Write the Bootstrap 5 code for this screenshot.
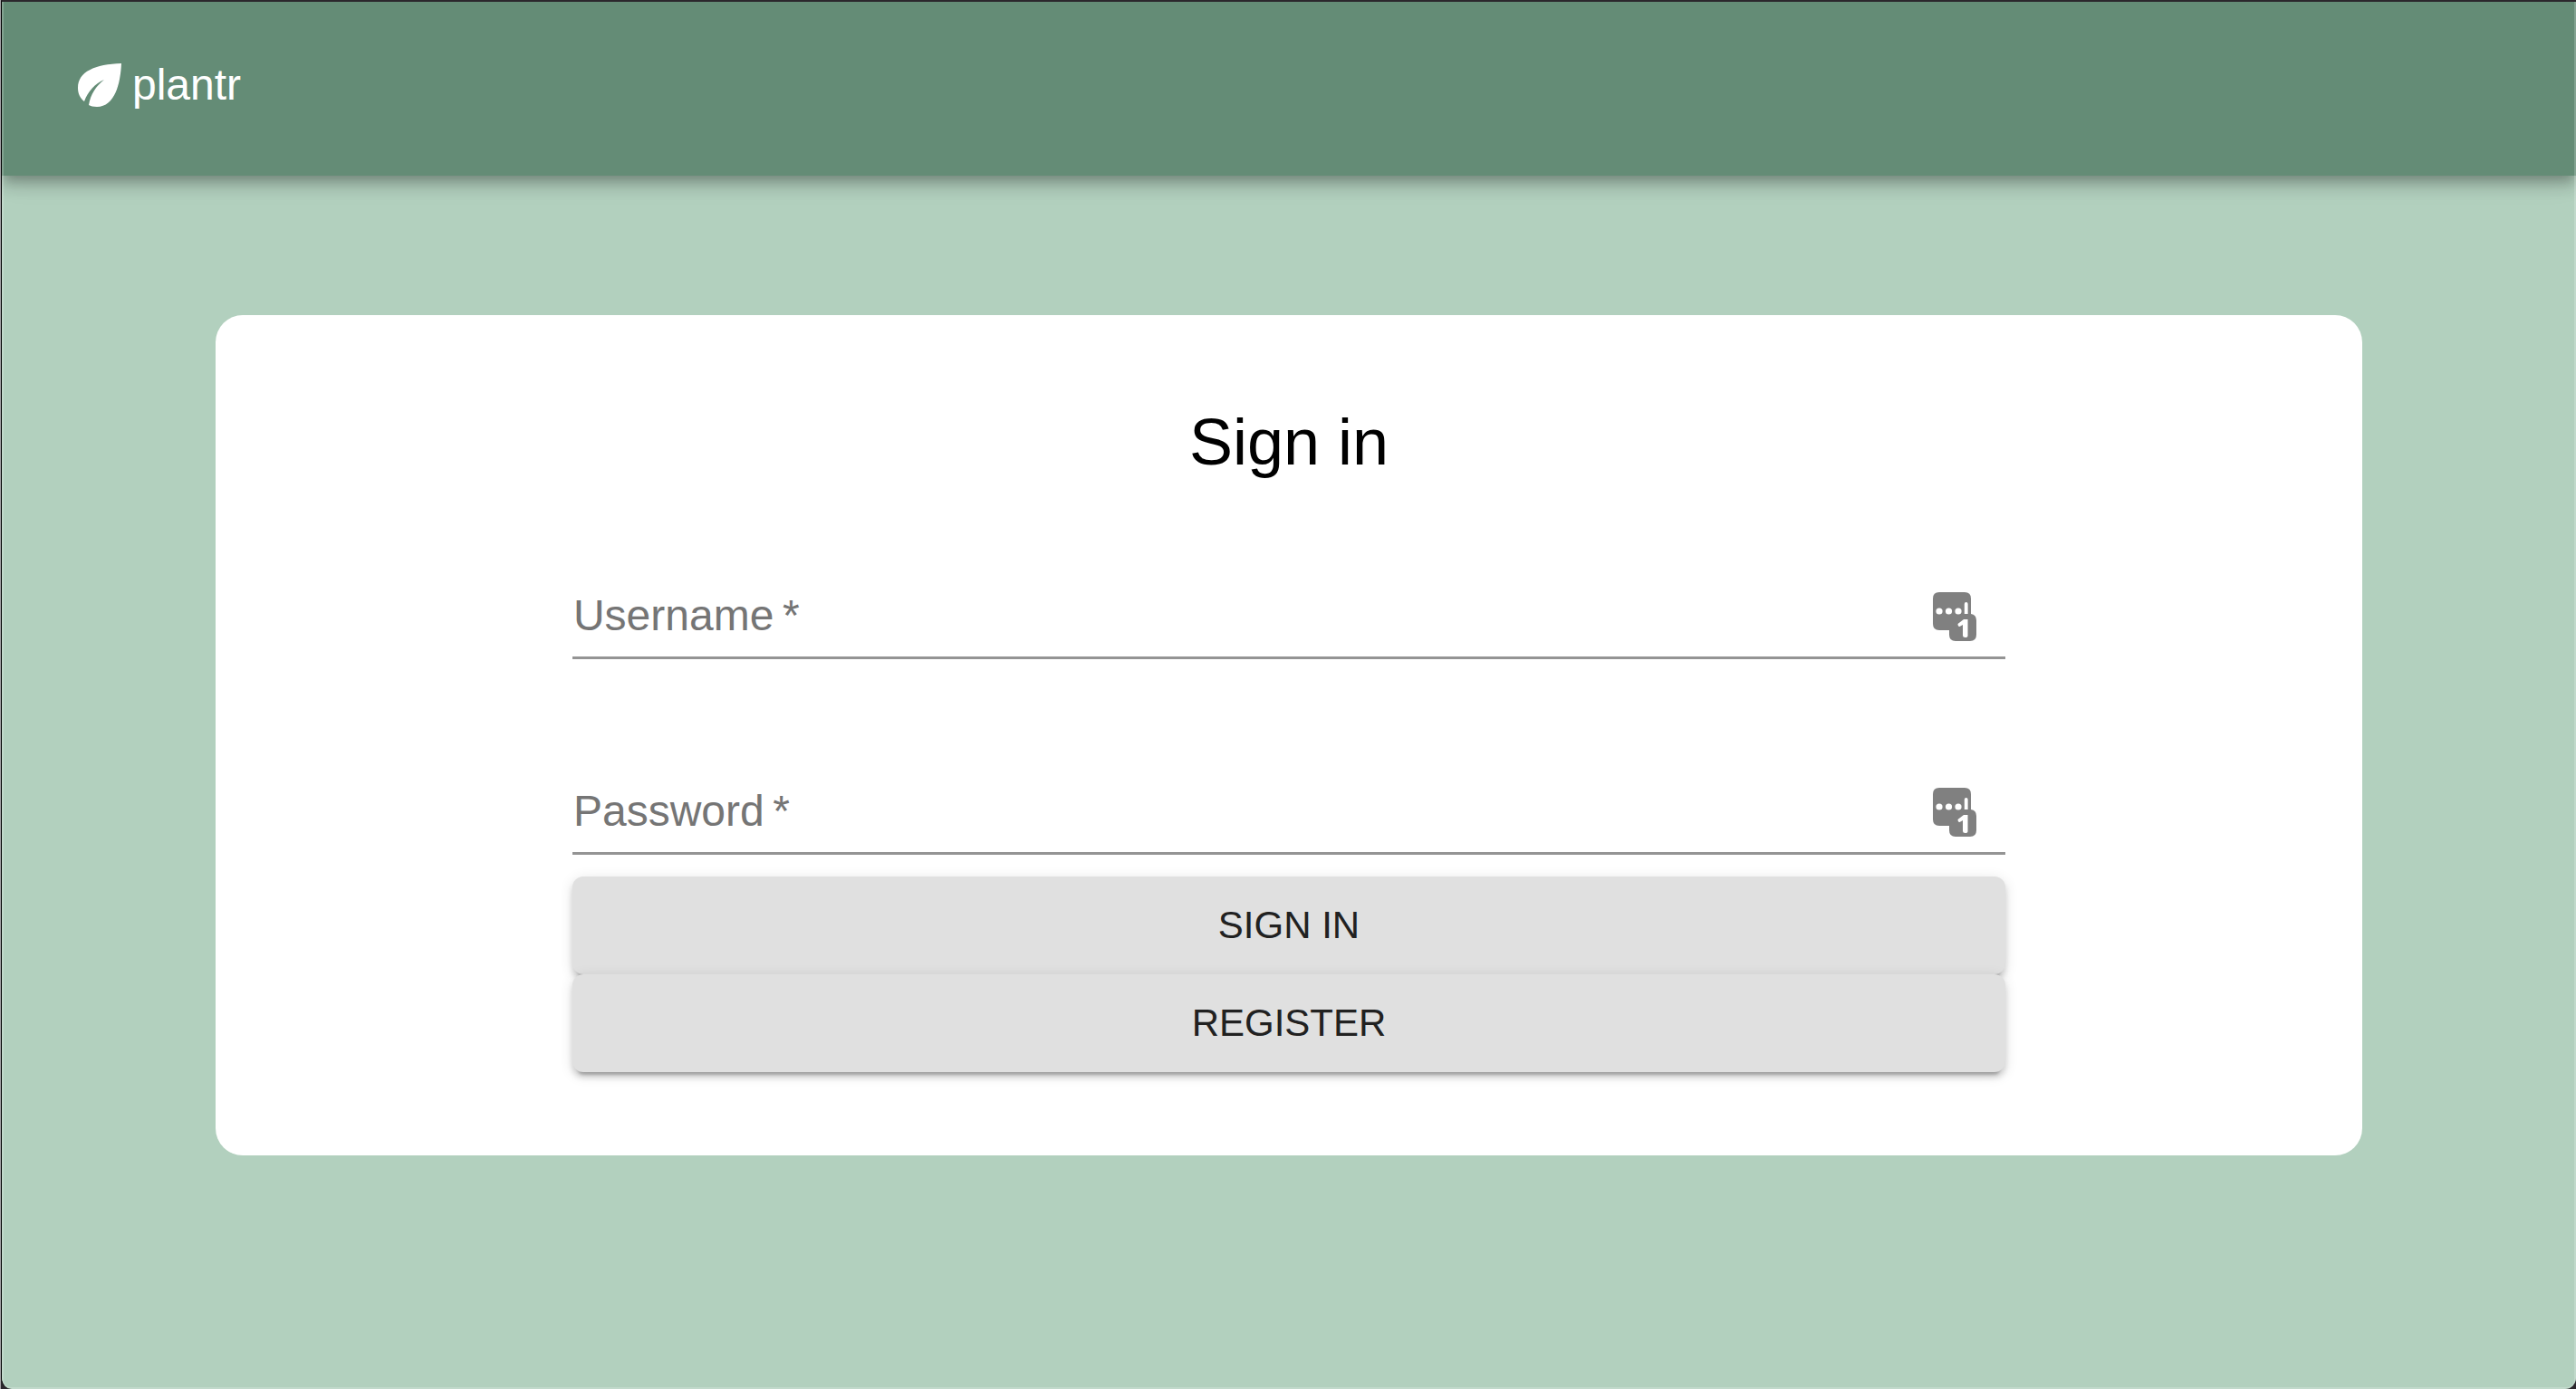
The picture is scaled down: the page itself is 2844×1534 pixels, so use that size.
<!DOCTYPE html>
<html lang="en">
<head>
<meta charset="utf-8">
<meta name="viewport" content="width=device-width, initial-scale=1">
<title>plantr</title>
<link href="https://cdn.jsdelivr.net/npm/bootstrap@5.3.0/dist/css/bootstrap.min.css" rel="stylesheet">
<style>
body { background: #2b272c; font-family: "Liberation Sans", Arial, sans-serif; font-size: 48px; }
.app-window { background: #b2d0be; border-top: 2px solid #2b272c; border-left: 1px solid #000; border-radius: 0 0 12px 12px; overflow: hidden; }
.app-shell { border-left: 1px solid #a6a4a8; }
/* light rim just inside the window frame */
.app-window::after { content: ""; position: absolute; inset: 0; border: 2px solid rgba(255,255,255,.2); border-top: 0; border-radius: 0 0 10px 10px; pointer-events: none; z-index: 5; }
.app-bar { height: 192px; padding: 0 84px 8px; background: #648c76; box-shadow: 0 6px 12px -3px rgba(0,0,0,.2), 0 12px 15px 0 rgba(0,0,0,.14), 0 3px 30px 0 rgba(0,0,0,.12); }
.brand-link { gap: 12px; line-height: 72px; color: #fff; }
.brand-link svg { width: 48px; height: 48px; }
.app-main { padding-top: 154px; }
.panel { width: 83.4%; border-radius: 30px; padding: 92px 0; }
.panel h1 { font-size: 72px; line-height: 96px; font-weight: 400; color: #000; }
.panel form { width: 66.75%; }
.field { padding-top: 48px; margin: 48px 0 24px; }
.field label { top: 72px; left: 1px; line-height: 48px; color: #757575; pointer-events: none; }
.field input { height: 96px; padding: 0 96px 0 0; font-size: 48px; border: 0; border-bottom: 3px solid #949494; border-radius: 0; background: transparent; }
.field input:focus { box-shadow: none; border-color: #648c76; }
.field input:focus ~ label, .field input:not(:placeholder-shown) ~ label { top: 0; font-size: 36px; }
.fill-btn { right: 32px; bottom: 20px; width: 48px; height: 54px; }
.fill-btn svg { width: 48px; height: 54px; }
.btn-raised { height: 108px; padding: 0 48px 2px; font-size: 42px; color: #212121; background: #e0e0e0; border: 0; border-radius: 12px; box-shadow: 0 9px 3px -6px rgba(0,0,0,.2), 0 6px 6px 0 rgba(0,0,0,.14), 0 3px 15px 0 rgba(0,0,0,.12); }
.btn-raised:hover { background: #d5d5d5; }
</style>
<script src="https://cdn.jsdelivr.net/npm/bootstrap@5.3.0/dist/js/bootstrap.bundle.min.js" defer></script>
</head>
<body>
<div class="app-shell">
<div class="app-window position-relative min-vh-100">
  <header class="app-bar position-relative d-flex align-items-center">
    <a class="brand-link d-flex align-items-center text-decoration-none" href="#">
      <svg viewBox="0 0 48 48" fill="#fff" aria-hidden="true"><path d="M48 0C47 22 41 48 21 48C17 48 14 47 12 46C14 34 20 25 29 18C19 22 11 31 7 42C2 38 0 33 0 27C0 9 19 1 48 0Z"/></svg>
      <span>plantr</span>
    </a>
  </header>
  <main class="app-main">
    <section class="panel bg-white mx-auto">
      <h1 class="text-center mb-0">Sign in</h1>
      <form class="d-flex flex-column mx-auto">
        <div class="field position-relative">
          <input class="form-control" type="text" id="username" placeholder=" " required>
          <label class="position-absolute" for="username">Username&thinsp;*</label>
          <button class="fill-btn btn p-0 border-0 position-absolute d-flex" type="button" aria-label="Fill username">
            <svg viewBox="0 0 48 54" aria-hidden="true"><path fill="#808080" d="M7 0H35Q42 0 42 7V24Q48 25 48 31V47Q48 54 41 54H25Q18 54 18 47V42H7Q0 42 0 35V7Q0 0 7 0Z"/><g fill="#fff"><circle cx="7" cy="21" r="3.600"/><circle cx="17.500" cy="21" r="3.600"/><circle cx="28" cy="21" r="3.600"/><path d="M34.800 24V13Q34.800 11 36.700 11Q38.600 11 38.600 13V24ZM34 30H38.500V48Q38.500 50 35.700 50Q33 50 33 48V36L29.500 38Q27.500 38 27.500 35Z"/></g></svg>
          </button>
        </div>
        <div class="field position-relative">
          <input class="form-control" type="password" id="password" placeholder=" " required>
          <label class="position-absolute" for="password">Password&thinsp;*</label>
          <button class="fill-btn btn p-0 border-0 position-absolute d-flex" type="button" aria-label="Fill password">
            <svg viewBox="0 0 48 54" aria-hidden="true"><path fill="#808080" d="M7 0H35Q42 0 42 7V24Q48 25 48 31V47Q48 54 41 54H25Q18 54 18 47V42H7Q0 42 0 35V7Q0 0 7 0Z"/><g fill="#fff"><circle cx="7" cy="21" r="3.600"/><circle cx="17.500" cy="21" r="3.600"/><circle cx="28" cy="21" r="3.600"/><path d="M34.800 24V13Q34.800 11 36.700 11Q38.600 11 38.600 13V24ZM34 30H38.500V48Q38.500 50 35.700 50Q33 50 33 48V36L29.500 38Q27.500 38 27.500 35Z"/></g></svg>
          </button>
        </div>
        <button class="btn btn-raised w-100 text-uppercase" type="submit">Sign in</button>
        <button class="btn btn-raised w-100 text-uppercase" type="button">Register</button>
      </form>
    </section>
  </main>
</div>
</div>
</body>
</html>
